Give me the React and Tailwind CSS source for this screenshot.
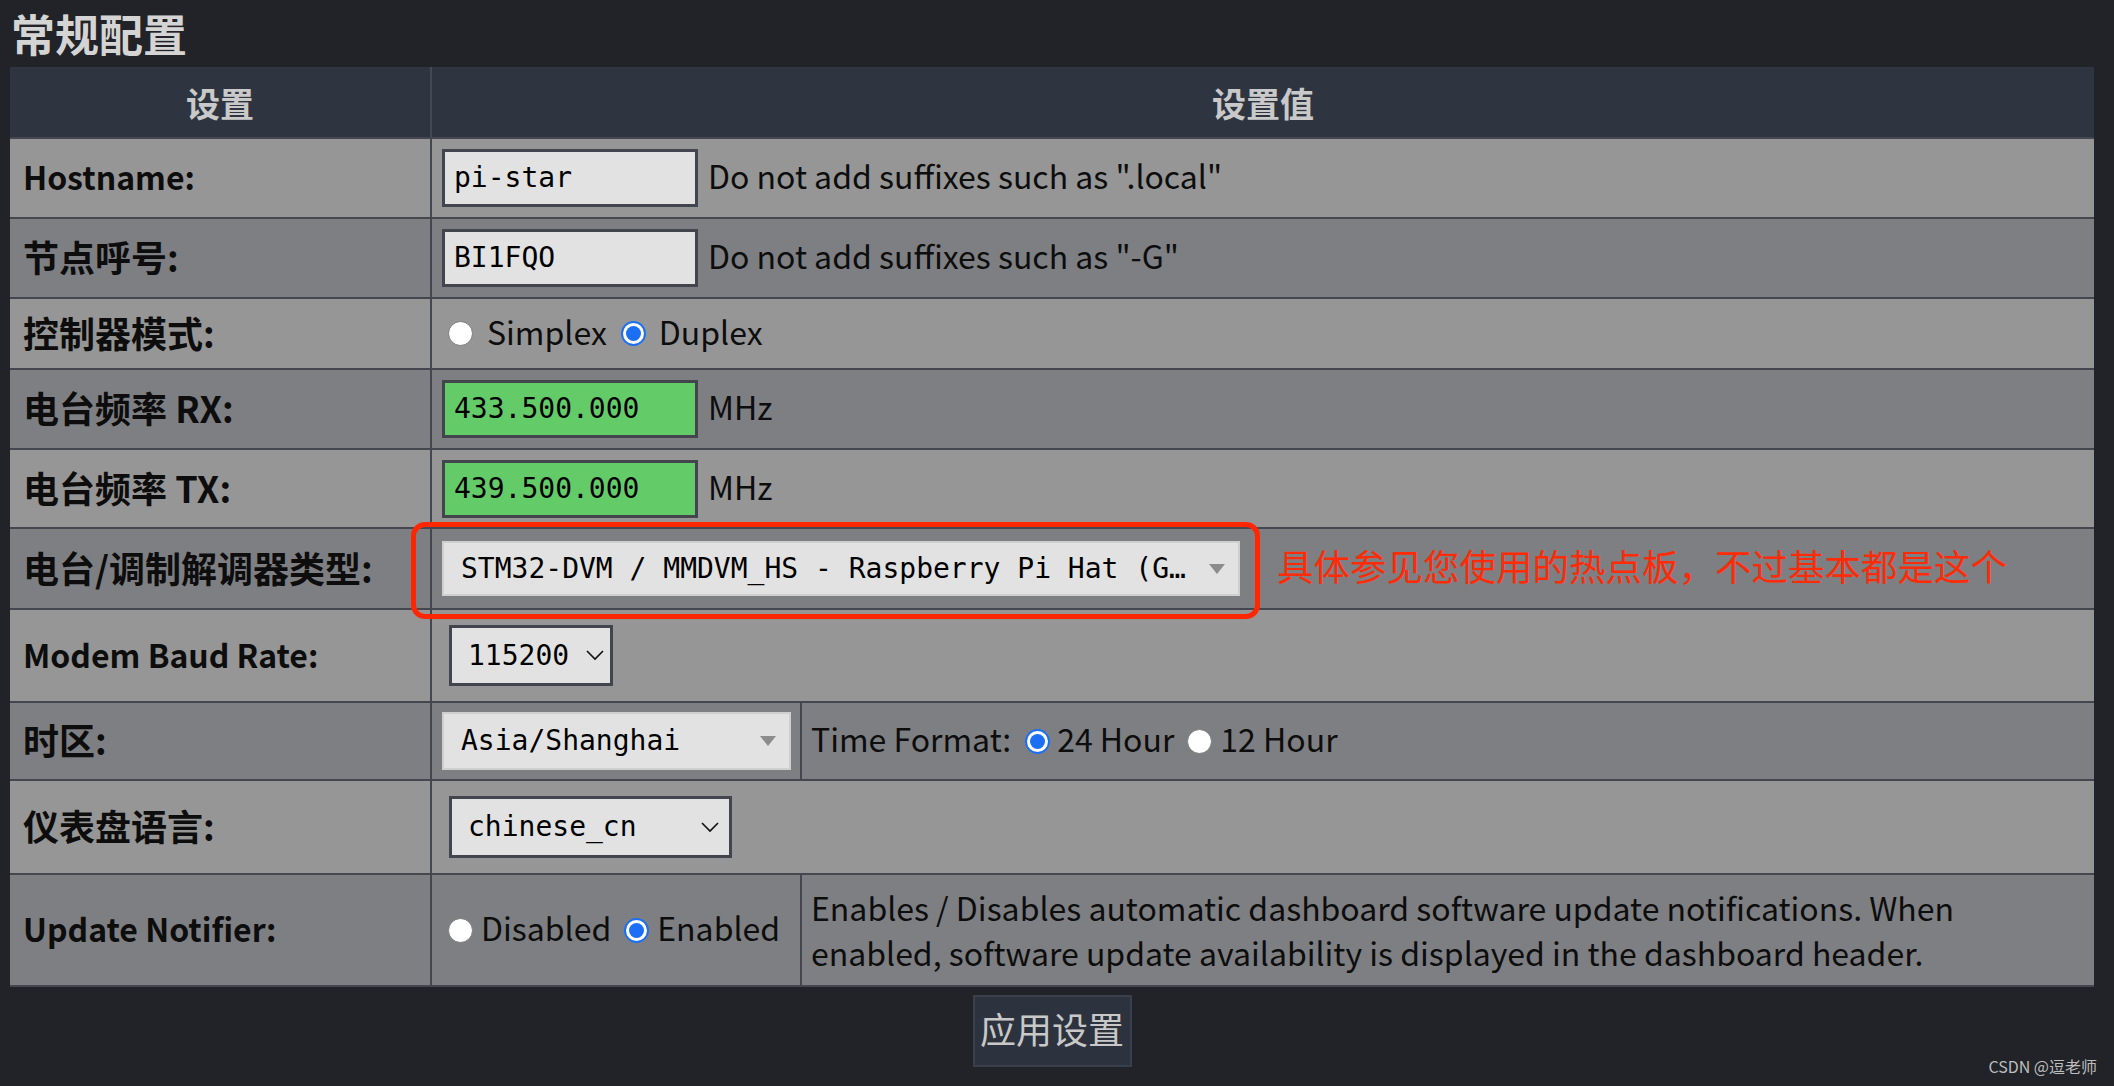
import React from "react"

// pi-star style config table
const Radio = ({ checked }) => {
    if (checked) {
        return (
            <span className="flex h-[25px] w-[25px] shrink-0 items-center justify-center rounded-full border-2 border-[#1b6ff5] bg-white">
                <span className="block h-[15px] w-[15px] rounded-full bg-[#1b6ff5]" />
            </span>
        )
    }
    return <span className="block h-[25px] w-[25px] shrink-0 rounded-full border border-[#7a7a7a] bg-white" />
}

const Label = ({ children, latin }) => (
    <div className={`flex w-[422px] shrink-0 items-center border-r-2 border-[#44474f] pl-[13px] font-bold text-[#0d0d0d] ${latin ? "text-[32px]" : "text-[36px]"}`}>
        <span className="-translate-y-[2px]">{children}</span>
    </div>
)

const Row = ({ label, dark, h, latin, children }) => {
    return (
        <div className={`relative flex border-t-2 border-[#44474f] ${dark ? "bg-[#7e7f83]" : "bg-[#969696]"} ${h}`}>
            <Label latin={latin}>{label}</Label>
            <div className="flex flex-1 items-center">{children}</div>
        </div>
    )
}

const TextBox = ({ value, green }) => {
    return (
        <div className={`ml-[10px] flex h-[58px] w-[256px] shrink-0 items-center border-[3px] border-[#42454d] pl-[9px] font-['DejaVu_Sans_Mono',monospace] text-[28px] text-black ${green ? "bg-[#64cb69]" : "bg-[#e2e2e2]"}`}>
            {value}
        </div>
    )
}

const Triangle = () => (
    <svg width="16" height="10" viewBox="0 0 16 10" className="shrink-0">
        <polygon points="0,0 16,0 8,10" fill="#8c8c8c" />
    </svg>
)

const Chevron = () => (
    <svg width="18" height="11" viewBox="0 0 18 11" className="block shrink-0">
        <polyline points="1,1 9,9 17,1" fill="none" stroke="#111" strokeWidth="1.6" />
    </svg>
)

const Hint = ({ children, className = "" }) => (
    <span className={`-translate-y-[3px] text-[32px] text-[#0d0d0d] ${className}`}>{children}</span>
)

export default function App() {
    return (
        <div className="relative min-h-screen w-full bg-[#212328] font-['Noto_Sans_CJK_SC','Noto_Sans',sans-serif]">
            <h2 className="h-[67px] pl-[11px] text-[44px] font-bold leading-[67px] text-[#d4d4d4]">常规配置</h2>

            <div className="mx-[10px] w-[2084px] border-b-2 border-[#44474f]">
                {/* header */}
                <div className="flex h-[70px] bg-[#2f3540] text-[34px] font-bold text-[#c9c9c9]">
                    <div className="flex w-[422px] items-center justify-center border-r-2 border-[#434a55]">设置</div>
                    <div className="flex flex-1 items-center justify-center">设置值</div>
                </div>

                <Row label="Hostname:" latin h="h-[80px]">
                    <TextBox value="pi-star" />
                    <Hint className="ml-[10px]">Do not add suffixes such as ".local"</Hint>
                </Row>

                <Row label="节点呼号:" dark h="h-[80px]">
                    <TextBox value="BI1FQO" />
                    <Hint className="ml-[10px]">Do not add suffixes such as "-G"</Hint>
                </Row>

                <Row label="控制器模式:" h="h-[71px]">
                    <span className="ml-[16px]"><Radio /></span>
                    <Hint className="ml-[14px]">Simplex</Hint>
                    <span className="ml-[14px]"><Radio checked /></span>
                    <Hint className="ml-[13px]">Duplex</Hint>
                </Row>

                <Row label="电台频率 RX:" dark h="h-[80px]">
                    <TextBox value="433.500.000" green />
                    <Hint className="ml-[10px]">MHz</Hint>
                </Row>

                <Row label="电台频率 TX:" h="h-[79px]">
                    <TextBox value="439.500.000" green />
                    <Hint className="ml-[10px]">MHz</Hint>
                </Row>

                <Row label="电台/调制解调器类型:" dark h="h-[81px]">
                    <div className="ml-[10px] flex h-[55px] w-[798px] shrink-0 items-center justify-between border-2 border-[#cfcfcf] bg-[#e2e2e2] pl-[17px] pr-[13px] font-['DejaVu_Sans_Mono',monospace] text-[28px] text-black">
                        <span className="whitespace-nowrap">STM32-DVM / MMDVM_HS - Raspberry Pi Hat (G…</span>
                        <Triangle />
                    </div>
                    <span className="ml-[37px] -translate-y-[2px] text-[36.5px] text-[#ff2a06]">具体参见您使用的热点板，不过基本都是这个</span>
                    <div className="absolute left-[401px] top-[-7px] z-10 h-[97px] w-[849px] rounded-[14px] border-[5px] border-[#ff2600]" />
                </Row>

                <Row label="Modem Baud Rate:" latin h="h-[93px]">
                    <div className="ml-[17px] flex h-[61px] w-[164px] items-center border-[3px] border-[#42454d] bg-[#e2e2e2] pl-[16px] pr-[6px] font-['DejaVu_Sans_Mono',monospace] text-[28px] text-black">
                        <span>115200</span>
                        <span className="ml-auto"><Chevron /></span>
                    </div>
                </Row>

                {/* time zone row has 3 cells */}
                <div className="flex h-[78px] border-t-2 border-[#44474f] bg-[#7e7f83]">
                    <Label>时区:</Label>
                    <div className="flex w-[370px] shrink-0 items-center border-r-2 border-[#44474f]">
                        <div className="ml-[10px] flex h-[58px] w-[349px] items-center justify-between border-2 border-[#cfcfcf] bg-[#e2e2e2] pl-[17px] pr-[13px] font-['DejaVu_Sans_Mono',monospace] text-[28px] text-black">
                            <span>Asia/Shanghai</span>
                            <Triangle />
                        </div>
                    </div>
                    <div className="flex flex-1 items-center pl-[9px]">
                        <Hint>Time Format:</Hint>
                        <span className="ml-[14px]"><Radio checked /></span>
                        <Hint className="ml-[7px]">24 Hour</Hint>
                        <span className="ml-[13px]"><Radio /></span>
                        <Hint className="ml-[8px]">12 Hour</Hint>
                    </div>
                </div>

                <Row label="仪表盘语言:" h="h-[94px]">
                    <div className="ml-[17px] flex h-[62px] w-[283px] items-center border-[3px] border-[#42454d] bg-[#e2e2e2] pl-[16px] pr-[10px] font-['DejaVu_Sans_Mono',monospace] text-[28px] text-black">
                        <span>chinese_cn</span>
                        <span className="ml-auto"><Chevron /></span>
                    </div>
                </Row>

                <div className="flex h-[112px] border-t-2 border-[#44474f] bg-[#7e7f83]">
                    <Label latin>Update Notifier:</Label>
                    <div className="flex w-[370px] shrink-0 items-center border-r-2 border-[#44474f]">
                        <span className="ml-[16px]"><Radio /></span>
                        <Hint className="ml-[8px]">Disabled</Hint>
                        <span className="ml-[13px]"><Radio checked /></span>
                        <Hint className="ml-[8px]">Enabled</Hint>
                    </div>
                    <div className="flex flex-1 items-center pl-[9px] pr-[60px]">
                        <p className="text-[32px] leading-[45px] text-[#0d0d0d]">
                            Enables / Disables automatic dashboard software update notifications. When enabled, software update availability is displayed in the dashboard header.
                        </p>
                    </div>
                </div>
            </div>

            <div className="mx-[10px] flex w-[2084px] justify-center pt-[8px]">
                <button className="h-[72px] w-[159px] border-2 border-[#3a404b] bg-[#2d333e] pb-[6px] text-[36px] text-[#c8c8c8]">
                    应用设置
                </button>
            </div>

            <div className="absolute bottom-[8px] right-[17px] text-[16px] text-[#bdbdbd]">CSDN @逗老师</div>
        </div>
    )
}
